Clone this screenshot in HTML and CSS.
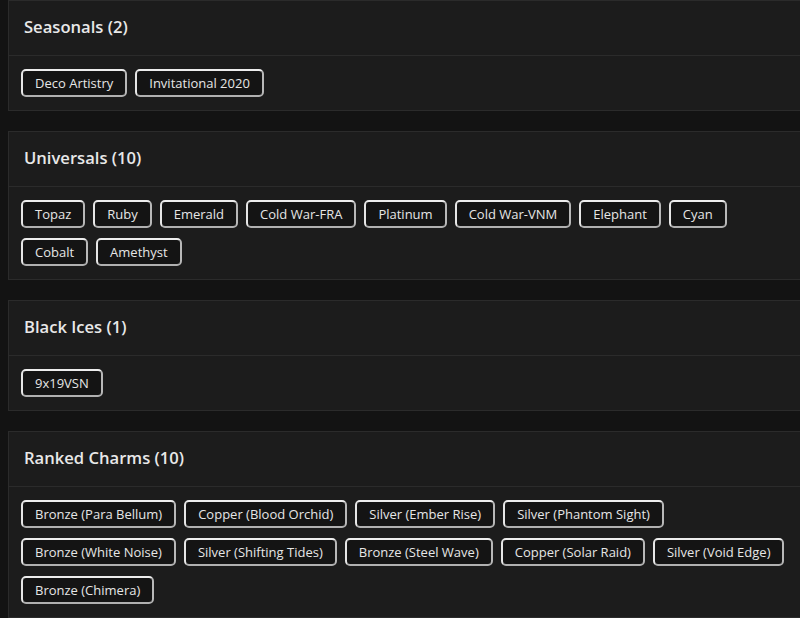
FILE: index.html
```html
<!DOCTYPE html>
<html lang="en">
<head>
<meta charset="utf-8">
<title>Collection</title>
<link rel="stylesheet" href="styles.css">
</head>
<body>
<main class="page">
  <section class="card">
    <header class="card-head"><h2 class="card-title">Seasonals (2)</h2></header>
    <div class="card-body">
      <span class="chip">Deco Artistry</span>
      <span class="chip">Invitational 2020</span>
    </div>
  </section>
  <section class="card">
    <header class="card-head"><h2 class="card-title">Universals (10)</h2></header>
    <div class="card-body">
      <span class="chip">Topaz</span>
      <span class="chip">Ruby</span>
      <span class="chip">Emerald</span>
      <span class="chip">Cold War-FRA</span>
      <span class="chip">Platinum</span>
      <span class="chip">Cold War-VNM</span>
      <span class="chip">Elephant</span>
      <span class="chip">Cyan</span>
      <span class="chip">Cobalt</span>
      <span class="chip">Amethyst</span>
    </div>
  </section>
  <section class="card">
    <header class="card-head"><h2 class="card-title">Black Ices (1)</h2></header>
    <div class="card-body">
      <span class="chip">9x19VSN</span>
    </div>
  </section>
  <section class="card">
    <header class="card-head"><h2 class="card-title">Ranked Charms (10)</h2></header>
    <div class="card-body">
      <span class="chip">Bronze (Para Bellum)</span>
      <span class="chip">Copper (Blood Orchid)</span>
      <span class="chip">Silver (Ember Rise)</span>
      <span class="chip">Silver (Phantom Sight)</span>
      <span class="chip">Bronze (White Noise)</span>
      <span class="chip">Silver (Shifting Tides)</span>
      <span class="chip">Bronze (Steel Wave)</span>
      <span class="chip">Copper (Solar Raid)</span>
      <span class="chip">Silver (Void Edge)</span>
      <span class="chip">Bronze (Chimera)</span>
    </div>
  </section>
</main>
</body>
</html>
```
FILE: styles.css
```css
html, body {
  margin: 0;
  padding: 0;
  background: #131313;
  overflow: hidden;
}

body {
  font-family: "Open Sans", "DejaVu Sans", sans-serif;
  color: #e4e4e4;
}

.page {
  padding-left: 8px;
  display: flex;
  flex-direction: column;
  gap: 20px;
  width: 830px;
}

.card {
  background: #1c1c1c;
  border: 1px solid #2b2b2b;
}

.card-head {
  box-sizing: border-box;
  height: 54px;
  display: flex;
  align-items: center;
  padding: 0 0 3px 15px;
  border-bottom: 1px solid #2b2b2b;
  box-sizing: content-box;
  height: 51px;
}

.card-title {
  margin: 0;
  font-size: 16.6px;
  font-weight: 600;
  color: #e8e8e8;
}

.card-body {
  display: flex;
  flex-wrap: wrap;
  gap: 10px 8px;
  padding: 13px 12px 13px 12px;
  width: 780px;
}

.chip {
  box-sizing: border-box;
  height: 28px;
  line-height: 24px;
  padding: 0 12px;
  border: 2px solid;
  border-color: #ededed #b8b8b8 #b0b0b0 #e6e6e6;
  border-radius: 5px;
  background: #141414;
  font-size: 13px;
  color: #e6e6e6;
  white-space: nowrap;
}
```
